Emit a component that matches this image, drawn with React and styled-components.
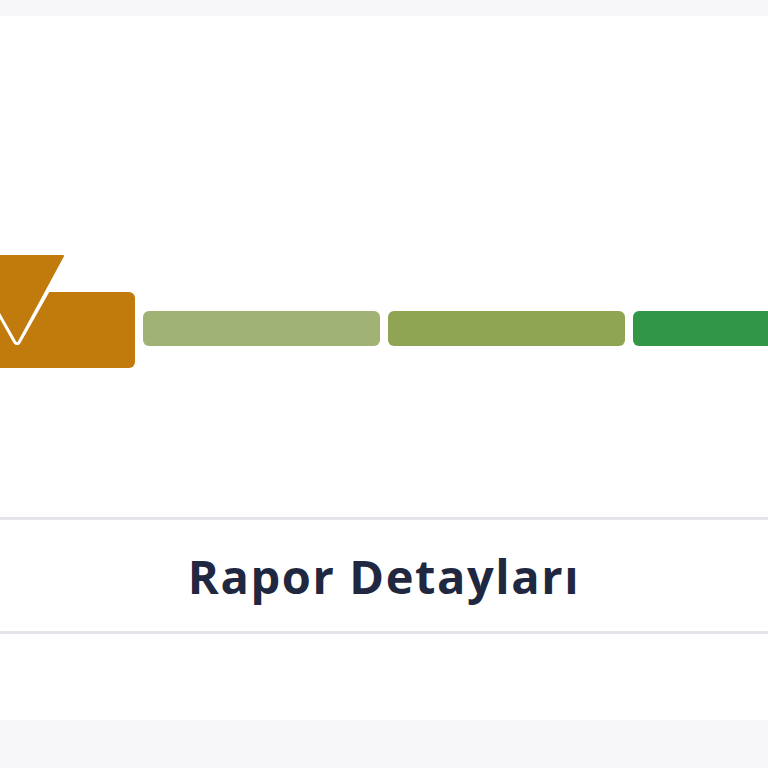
import styled, { createGlobalStyle } from "styled-components";

const Global = createGlobalStyle`
  html, body { margin: 0; padding: 0; background: #f7f7f9; }
  body { font-family: "Open Sans", "Noto Sans", sans-serif; }
`;

const Page = styled.div`
  background: #f7f7f9;
  padding: 16px 0 48px;
`;

const Card = styled.div`
  background: #ffffff;
  overflow: hidden;
`;

const ScoreArea = styled.div`
  height: 501px;
  box-sizing: border-box;
  padding-top: 276px;
`;

const Bar = styled.div`
  display: flex;
  align-items: center;
  gap: 8px;
  margin-left: -102px;
  width: max-content;
`;

const Segment = styled.div`
  position: relative;
  flex: 0 0 auto;
  width: 237px;
  height: ${p => (p.$active ? "76px" : "35px")};
  margin-bottom: ${p => (p.$active ? "0" : "3px")};
  border-radius: 6px;
  background: ${p => p.$color};
`;

const Marker = styled.svg`
  position: absolute;
  top: -44px;
  left: calc(50% - 52px);
`;

const Divider = styled.div`
  height: 3px;
  background: #e3e5ea;
`;

const TitleRow = styled.div`
  height: 111px;
  display: flex;
  align-items: center;
  justify-content: center;
`;

const Title = styled.h2`
  margin: 0;
  font-size: 47px;
  font-weight: 700;
  color: #1f2840;
  letter-spacing: 1.6px;
`;

const Spacer = styled.div`
  height: 86px;
`;

const segments = [
  { color: "#c17b0d", active: true },
  { color: "#a1b275" },
  { color: "#8fa553" },
  { color: "#319645" },
];

export default function App() {
  return (
    <>
      <Global />
      <Page>
        <Card>
          <ScoreArea>
            <Bar>
              {segments.map((s, i) => (
                <Segment key={i} $color={s.color} $active={s.active}>
                  {s.active && (
                    <Marker width="104" height="97" viewBox="0 0 104 97">
                      <polygon points="4,8 100,8 52,93" fill="none" stroke="#ffffff" strokeWidth="8" strokeLinejoin="round" />
                      <polygon points="4,8 98,8 52,93" fill={s.color} stroke={s.color} strokeWidth="2" strokeLinejoin="round" />
                    </Marker>
                  )}
                </Segment>
              ))}
            </Bar>
          </ScoreArea>
          <Divider />
          <TitleRow>
            <Title>Rapor Detayları</Title>
          </TitleRow>
          <Divider />
          <Spacer />
        </Card>
      </Page>
    </>
  );
}
